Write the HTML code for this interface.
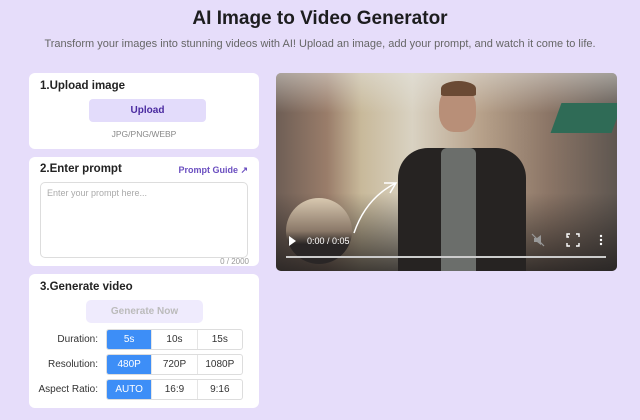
<!DOCTYPE html><html><head><style>
*{margin:0;padding:0;box-sizing:border-box}
body{width:640px;height:420px;background:#e6ddfa;font-family:"Liberation Sans",sans-serif;position:relative;overflow:hidden;color:#222}
.a{position:absolute}
h1{position:absolute;top:8px;left:0;width:640px;text-align:center;font-size:19px;font-weight:bold;color:#1d1d1f}
.sub{top:38px;left:0;width:640px;text-align:center;font-size:11px;color:#666}
.card{position:absolute;left:29px;width:230px;background:#fff;border-radius:6px}
.ct{position:absolute;left:11px;font-size:11.5px;font-weight:bold;color:#222}
.grid{position:absolute;left:106px;width:137px;height:21px;display:flex;border:1px solid #ddd;border-radius:3px;overflow:hidden;font-size:10px}
.grid div{flex:1;display:flex;align-items:center;justify-content:center;color:#333;border-left:1px solid #e5e5e5}
.grid div.on{background:#3d8ef7;color:#fff;border-left:none}
.lb{position:absolute;right:542px;font-size:10px;color:#333;text-align:right}
</style></head><body>
<h1>AI Image to Video Generator</h1>
<div class="a sub">Transform your images into stunning videos with AI! Upload an image, add your prompt, and watch it come to life.</div>

<div class="card" style="top:73px;height:76px">
<div class="ct" style="top:7px">1.Upload image</div>
<div class="a" style="left:60px;top:26px;width:117px;height:23px;background:#e3dcfb;border-radius:4px;text-align:center;line-height:23px;font-size:10px;font-weight:bold;color:#4a2aa0">Upload</div>
<div class="a" style="left:0;top:56px;width:230px;text-align:center;font-size:8.5px;color:#888">JPG/PNG/WEBP</div>
</div>

<div class="card" style="top:157px;height:109px">
<div class="ct" style="top:6px">2.Enter prompt</div>
<div class="a" style="right:11px;top:8px;font-size:9px;color:#6b4fc0;font-weight:bold">Prompt Guide ↗</div>
<div class="a" style="left:11px;top:25px;width:208px;height:76px;border:1px solid #ddd;border-radius:5px"></div>
<div class="a" style="left:18px;top:31px;font-size:9px;color:#aaa">Enter your prompt here...</div>
<div class="a" style="right:10px;top:100px;font-size:8px;color:#999">0 / 2000</div>
</div>

<div class="card" style="top:274px;height:134px">
<div class="ct" style="top:7px">3.Generate video</div>
<div class="a" style="left:57px;top:26px;width:117px;height:23px;background:#efebfd;border-radius:5px;text-align:center;line-height:23px;font-size:10px;font-weight:bold;color:#bbb">Generate Now</div>
</div>
<div class="lb" style="top:334px">Duration:</div>
<div class="lb" style="top:359px">Resolution:</div>
<div class="lb" style="top:384px">Aspect Ratio:</div>
<div class="grid" style="top:329px"><div class="on">5s</div><div>10s</div><div>15s</div></div>
<div class="grid" style="top:354px"><div class="on">480P</div><div>720P</div><div>1080P</div></div>
<div class="grid" style="top:379px"><div class="on">AUTO</div><div>16:9</div><div>9:16</div></div>

<div class="a" style="left:276px;top:73px;width:341px;height:198px;border-radius:5px;overflow:hidden;background:linear-gradient(90deg,#6e5e55 0%,#9a7d6a 15%,#c8b99a 25%,#d9d2c2 40%,#b7a18a 60%,#8b7566 80%,#5e5650 100%)">
<div class="a" style="left:0;top:0;width:341px;height:40px;background:linear-gradient(180deg,rgba(230,230,225,.5),rgba(0,0,0,0))"></div>
<div class="a" style="left:280px;top:30px;width:61px;height:30px;background:#2f6b56;transform:skewX(-20deg)"></div>
<div class="a" style="left:0;top:120px;width:341px;height:78px;background:linear-gradient(180deg,rgba(40,35,35,0),rgba(30,28,28,.8))"></div>
<div class="a" style="left:163px;top:13px;width:37px;height:46px;background:#b88f78;border-radius:45% 45% 40% 40%"></div>
<div class="a" style="left:165px;top:8px;width:35px;height:15px;background:#6a4a34;border-radius:50% 50% 10% 10%"></div>
<div class="a" style="left:122px;top:75px;width:128px;height:123px;background:#262322;border-radius:30px 30px 0 0"></div>
<div class="a" style="left:165px;top:75px;width:35px;height:123px;background:#6b6e6b;border-radius:6px 6px 0 0"></div>
<div class="a" style="left:10px;top:125px;width:66px;height:66px;border-radius:50%;background:linear-gradient(180deg,#d8c8b0,#8a7868 50%,#2a2626 70%)"></div>
<svg class="a" style="left:0;top:0" width="341" height="198"><path d="M78 160 Q90 125 120 110" stroke="#fff" stroke-width="1.5" fill="none"/><path d="M108 110 L120 110 L114 120" stroke="#fff" stroke-width="1.5" fill="none"/>
<path d="M13 163 L20 168 L13 173Z" fill="#fff"/>
<rect x="10" y="183" width="320" height="2" fill="#ccc"/>
<path d="M293 164h-2v-3h3M300 161h3v3M303 170v3h-3M294 173h-3v-3" stroke="#fff" stroke-width="1.4" fill="none"/>
<circle cx="325" cy="163" r="1.2" fill="#fff"/><circle cx="325" cy="167" r="1.2" fill="#fff"/><circle cx="325" cy="171" r="1.2" fill="#fff"/>
<path d="M258 165h3l4-3v10l-4-3h-3z" fill="#999"/><path d="M256 161l12 12" stroke="#999" stroke-width="1.2"/>
<text x="31" y="171" fill="#fff" font-size="9" font-family="Liberation Sans">0:00 / 0:05</text></svg>
</div>
</body></html>
